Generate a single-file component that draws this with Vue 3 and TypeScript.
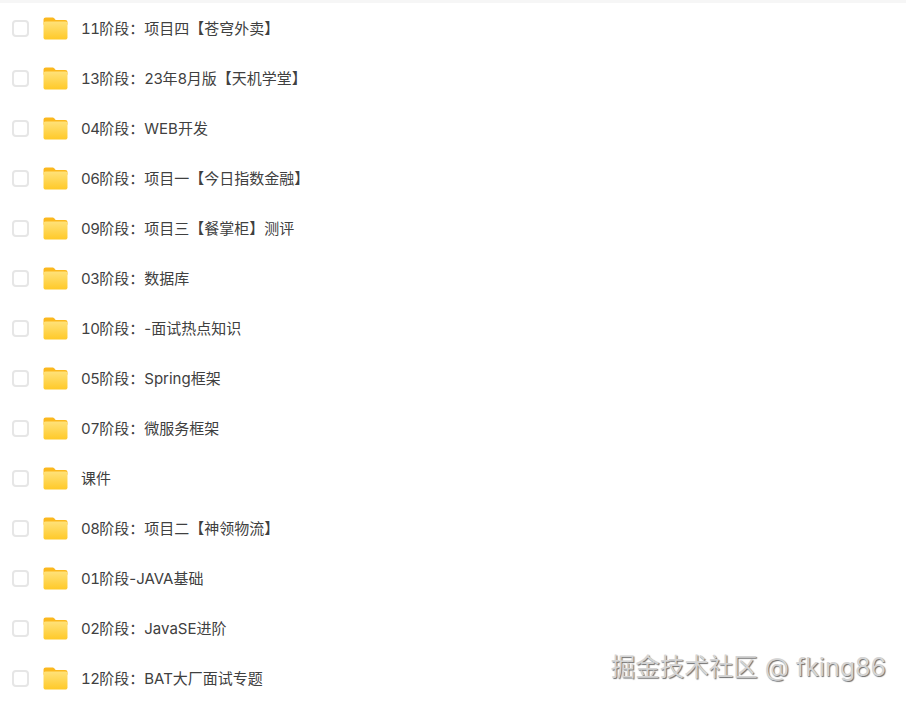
<template>
  <div class="page">
    <div class="top-line"></div>
    <ul class="file-list">
      <li v-for="name in folders" :key="name" class="file-row">
        <span class="check-box"></span>
        <svg class="folder-icon" viewBox="0 0 26 24" width="25" height="23">
          <defs>
            <linearGradient id="folderFront" x1="0" y1="0" x2="0" y2="1">
              <stop offset="0" stop-color="#ffe27a" />
              <stop offset="1" stop-color="#ffc928" />
            </linearGradient>
          </defs>
          <path d="M0.5 3C0.5 1.4 1.4 0.5 3 0.5H9.5C10.6 0.5 11.2 0.9 11.9 1.6L13.2 3H23C24.6 3 25.5 3.9 25.5 5.5V8H0.5Z" fill="#fbb81e" />
          <path d="M0.5 6.6C0.5 5.4 1.4 4.6 2.6 4.6H23.4C24.6 4.6 25.5 5.4 25.5 6.6V21C25.5 22.6 24.6 23.5 23 23.5H3C1.4 23.5 0.5 22.6 0.5 21Z" fill="url(#folderFront)" />
        </svg>
        <span class="file-name">
          <span
            v-for="(part, i) in splitDigits(name)"
            :key="i"
            :class="{ digits: /^\d+$/.test(part) }"
          >{{ part }}</span>
        </span>
      </li>
    </ul>
    <div class="watermark">掘金技术社区 <span class="watermark-user">@ fking86</span></div>
  </div>
</template>

<script setup lang="ts">
const folders: string[] = [
  '11阶段：项目四【苍穹外卖】',
  '13阶段：23年8月版【天机学堂】',
  '04阶段：WEB开发',
  '06阶段：项目一【今日指数金融】',
  '09阶段：项目三【餐掌柜】测评',
  '03阶段：数据库',
  '10阶段：-面试热点知识',
  '05阶段：Spring框架',
  '07阶段：微服务框架',
  '课件',
  '08阶段：项目二【神领物流】',
  '01阶段-JAVA基础',
  '02阶段：JavaSE进阶',
  '12阶段：BAT大厂面试专题'
]

// 数字单独一段，等宽显示
const splitDigits = (name: string): string[] => name.split(/(\d+)/).filter(Boolean)
</script>

<style>
html,
body {
  margin: 0;
  background: #fff;
  overflow: hidden;
}
</style>

<style scoped>
.page {
  position: relative;
  width: 906px;
  height: 704px;
  overflow: hidden;
  background: #fff;
  font-family: "Inter", "Noto Sans CJK SC", sans-serif;
}

.top-line {
  height: 3px;
  background: #f6f6f6;
}

.file-list {
  list-style: none;
  margin: 0;
  padding: 0;
}

.file-row {
  display: flex;
  align-items: center;
  height: 50px;
  padding-left: 12px;
}

.check-box {
  box-sizing: border-box;
  width: 17px;
  height: 17px;
  border: 2px solid #e6e6e6;
  border-radius: 4px;
  background: #fff;
}

.folder-icon {
  margin-left: 14px;
  flex-shrink: 0;
}

.file-name {
  margin-left: 13px;
  margin-bottom: 2px;
  font-size: 15px;
  color: #404040;
  white-space: nowrap;
}

.digits {
  font-feature-settings: "tnum";
  letter-spacing: -0.6px;
}

/* 水印 */
.watermark {
  position: absolute;
  right: 20px;
  top: 650px;
  font-size: 24.5px;
  line-height: 34px;
  color: #d4d4d4;
  text-shadow: 1px 1px 1px #6e6e6e;
  white-space: nowrap;
}

.watermark-user {
  font-size: 25px;
}
</style>
